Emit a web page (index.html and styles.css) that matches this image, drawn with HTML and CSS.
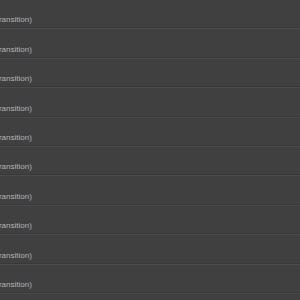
FILE: index.html
```html
<!DOCTYPE html>
<html lang="en">
<head>
  <meta charset="UTF-8">
  <title>Transitions</title>
  <link rel="stylesheet" href="styles.css">
</head>
<body>
  <ul class="list">
    <li class="item"><span class="label">(transition)</span></li>
    <li class="item"><span class="label">(transition)</span></li>
    <li class="item"><span class="label">(transition)</span></li>
    <li class="item"><span class="label">(transition)</span></li>
    <li class="item"><span class="label">(transition)</span></li>
    <li class="item"><span class="label">(transition)</span></li>
    <li class="item"><span class="label">(transition)</span></li>
    <li class="item"><span class="label">(transition)</span></li>
    <li class="item"><span class="label">(transition)</span></li>
    <li class="item"><span class="label">(transition)</span></li>
  </ul>
</body>
</html>
```

FILE: styles.css
```css
html, body {
  margin: 0;
  height: 100%;
  background-color: #404040;
  font-family: "Liberation Sans", Arial, sans-serif;
  overflow: hidden;
}
.list {
  list-style: none;
  margin: 0;
  padding: 0;
}
.item {
  height: 27.4px;
  border-bottom: 1px solid #393939;
  box-shadow: 0 1px 0 #4b4b4b;
  margin-bottom: 1px;
  display: flex;
  align-items: flex-end;
}
.label {
  margin-left: -6px;
  margin-bottom: 3px;
  font-size: 8px;
  color: #b4b4b4;
  white-space: nowrap;
}
```
